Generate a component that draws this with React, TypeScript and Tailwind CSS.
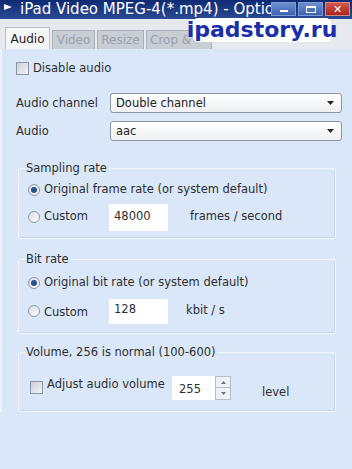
import React from 'react';

const font = { fontFamily: '"DejaVu Sans", Verdana, sans-serif' };

function Radio({ checked }: { checked?: boolean }) {
  return (
    <span className="flex h-[12px] w-[12px] items-center justify-center rounded-full border border-[#8a97a8] bg-gradient-to-br from-[#d8dde4] to-[#ffffff]">
      {checked && <span className="h-[6px] w-[6px] rounded-full bg-[#2a4f8c]" />}
    </span>
  );
}

function Check() {
  return <span className="h-[13px] w-[13px] border border-[#8a97a8] bg-gradient-to-br from-[#c9ced6] to-[#f4f5f7]" />;
}

function Select({ value }: { value: string }) {
  return (
    <div className="flex h-[20px] flex-1 items-center justify-between rounded-[3px] border border-[#8d97a3] bg-gradient-to-b from-white to-[#eef0f3] pl-[5px] pr-[7px] text-[11.5px] text-[#222]">
      <span>{value}</span>
      <svg width="7" height="4" viewBox="0 0 7 4"><path d="M0 0h7L3.5 4z" fill="#222" /></svg>
    </div>
  );
}

function Group({ label, children, className }: { label: string; children: React.ReactNode; className?: string }) {
  return (
    <div className={`relative mx-[16px] rounded-[2px] border border-[#f3f7fd] shadow-[inset_-1px_-1px_0_#c9d7ea] ${className ?? ''}`}>
      <span className="absolute left-[6px] top-[-9px] bg-[#d9e7f9] px-[1px] text-[11.5px] text-[#2e2e2e]">{label}</span>
      {children}
    </div>
  );
}

export default function App() {
  return (
    <div className="relative h-[469px] w-[352px] overflow-hidden bg-[#d9e7f9] text-[#2e2e2e]" style={font}>
      {/* title bar */}
      <div className="flex h-[19px] items-center bg-gradient-to-b from-[#0f2a72] to-[#2b4a95] pl-[4px] text-white">
        <svg width="8" height="6" viewBox="0 0 8 6" className="mr-[8px] mt-[-6px]"><path d="M0 0l8 3-8 3z" fill="#fff" /></svg>
        <span className="flex-1 whitespace-nowrap text-[15px] leading-none">iPad Video MPEG-4(*.mp4) - Options</span>
      </div>
      <div className="absolute right-[2px] top-[2px] flex gap-[2px]">
        <div className="flex h-[14px] w-[25px] items-end justify-center border border-[#7c9ad0] bg-gradient-to-b from-[#6d8fcf] to-[#3e62b0] pb-[3px]">
          <span className="h-[2px] w-[8px] bg-white" />
        </div>
        <div className="flex h-[14px] w-[25px] items-center justify-center border border-[#7c9ad0] bg-gradient-to-b from-[#6d8fcf] to-[#3e62b0]">
          <span className="h-[7px] w-[10px] border border-t-2 border-white" />
        </div>
        <div className="flex h-[14px] w-[25px] items-center justify-center border border-[#d98a7e] bg-gradient-to-b from-[#d5574a] to-[#a8251a] text-[11px] font-bold leading-none text-white">
          ✕
        </div>
      </div>

      {/* tabs */}
      <div className="flex h-[30px] items-end gap-[2px] bg-[#e6e9ee] pl-[5px]">
        <div className="flex h-[22px] w-[45px] items-center justify-center border border-b-0 border-[#b9c0ca] bg-[#f5f6f8] text-[12px] text-[#222]">Audio</div>
        <div className="flex h-[19px] w-[43px] items-center justify-center border border-b-0 border-[#aab1bb] bg-[#c9cdd4] text-[12px] text-[#9aa1aa]">Video</div>
        <div className="flex h-[19px] w-[47px] items-center justify-center border border-b-0 border-[#aab1bb] bg-[#c9cdd4] text-[12px] text-[#9aa1aa]">Resize</div>
        <div className="flex h-[19px] w-[66px] items-center border border-b-0 border-[#aab1bb] bg-[#c9cdd4] pl-[3px] text-[12px] text-[#9aa1aa]">Crop &amp; </div>
      </div>

      {/* watermark */}
      <div className="absolute left-[193px] top-[18px] flex h-[24px] w-[138px] items-center justify-center rounded-[5px] bg-white text-[22px] font-bold leading-none text-[#1b2fa8]">
        ipadstory.ru
      </div>

      {/* content */}
      <div className="flex flex-col border-l-2 border-[#eef3fa] text-[11.5px]">
        <div className="mt-[11px] flex items-center gap-[4px] pl-[14px]">
          <Check />
          <span>Disable audio</span>
        </div>

        <div className="mt-[16px] flex items-center pl-[14px] pr-[10px]">
          <span className="w-[94px]">Audio channel</span>
          <Select value="Double channel" />
        </div>
        <div className="mt-[8px] flex items-center pl-[14px] pr-[10px]">
          <span className="w-[94px]">Audio</span>
          <Select value="aac" />
        </div>

        <Group label="Sampling rate" className="mt-[27px] h-[71px]">
          <div className="mt-[12px] flex items-center gap-[4px] pl-[9px]">
            <Radio checked />
            <span>Original frame rate (or system default)</span>
          </div>
          <div className="mt-[5px] flex items-center pl-[9px]">
            <Radio />
            <span className="ml-[4px] w-[65px]">Custom</span>
            <div className="flex h-[27px] w-[59px] items-center bg-white pl-[5px]">48000</div>
            <span className="ml-[22px]">frames / second</span>
          </div>
        </Group>

        <Group label="Bit rate" className="mt-[20px] h-[75px]">
          <div className="mt-[14px] flex items-center gap-[4px] pl-[9px]">
            <Radio checked />
            <span>Original bit rate (or system default)</span>
          </div>
          <div className="mt-[7px] flex items-center pl-[9px]">
            <Radio />
            <span className="ml-[4px] mt-[4px] w-[65px]">Custom</span>
            <div className="h-[25px] w-[59px] bg-white pl-[5px] pt-[2px]">128</div>
            <span className="ml-[18px]">kbit / s</span>
          </div>
        </Group>

        <Group label="Volume, 256 is normal (100-600)" className="mt-[18px] h-[60px]">
          <div className="mt-[21px] flex items-center pl-[11px]">
            <Check />
            <span className="ml-[4px] mt-[-6px] w-[125px]">Adjust audio volume</span>
            <div className="flex h-[24px] w-[59px] bg-white">
              <span className="flex-1 pl-[7px] pt-[5px]">255</span>
              <div className="flex w-[16px] flex-col">
                <span className="flex flex-1 items-center justify-center border border-[#b3bcc8] bg-[#eef1f5]">
                  <svg width="5" height="3" viewBox="0 0 5 3"><path d="M0 3h5L2.5 0z" fill="#6b7585" /></svg>
                </span>
                <span className="flex flex-1 items-center justify-center border border-t-0 border-[#b3bcc8] bg-[#eef1f5]">
                  <svg width="5" height="3" viewBox="0 0 5 3"><path d="M0 0h5L2.5 3z" fill="#6b7585" /></svg>
                </span>
              </div>
            </div>
            <span className="ml-[31px] mt-[10px]">level</span>
          </div>
        </Group>
      </div>
    </div>
  );
}
